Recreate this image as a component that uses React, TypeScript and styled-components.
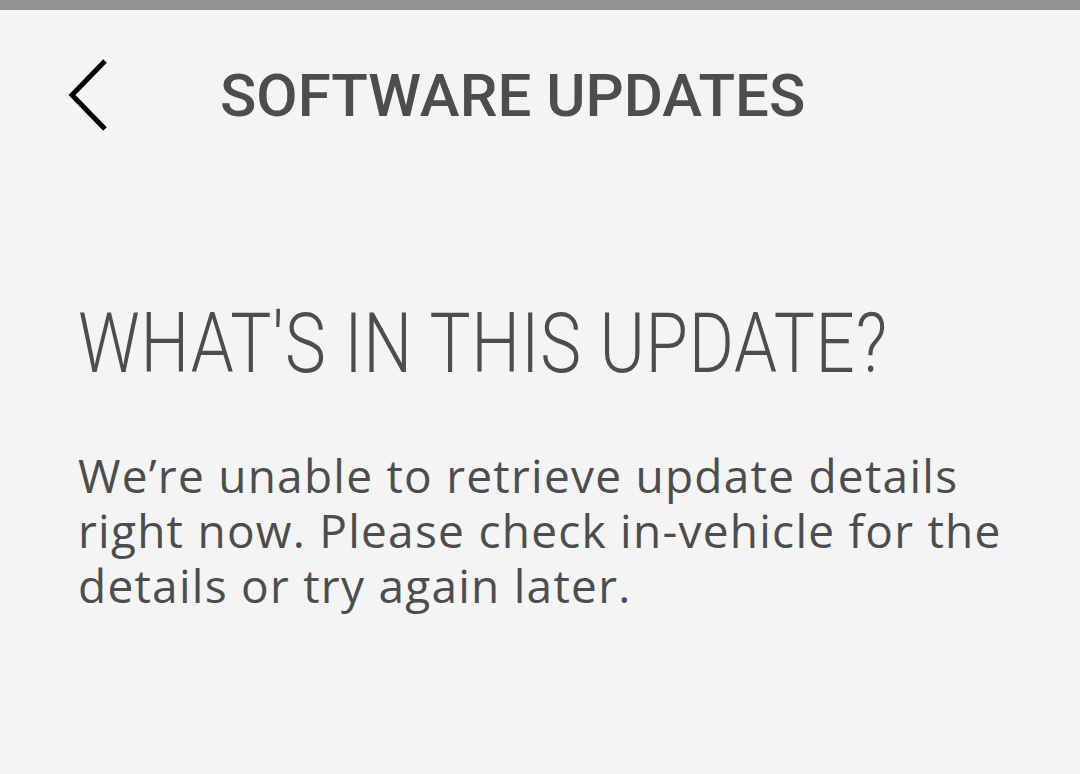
import React from "react";
import styled, { createGlobalStyle } from "styled-components";

const GlobalStyle = createGlobalStyle`
  html, body {
    margin: 0;
    padding: 0;
    background: #f4f4f4;
  }
`;

// Styled Components
const Screen = styled.div`
  width: 1080px;
  height: 774px;
  background: #f4f4f4;
  display: flex;
  flex-direction: column;
  overflow: hidden;
`;

const StatusStrip = styled.div`
  height: 10px;
  background: #939393;
  flex-shrink: 0;
`;

const Header = styled.header`
  height: 172px;
  display: flex;
  align-items: center;
  padding-left: 68px;
`;

const BackButton = styled.button`
  background: none;
  border: none;
  padding: 0;
  width: 42px;
  height: 74px;
  display: flex;
  align-items: center;
  cursor: pointer;
`;

const Title = styled.h1`
  margin: 0 0 0 110px;
  font-family: Roboto, "Noto Sans", sans-serif;
  font-weight: 500;
  font-size: 60px;
  line-height: 1;
  color: #4d4d4d;
  letter-spacing: 0;
`;

const Content = styled.main`
  padding: 0 0 0 78px;
  display: flex;
  flex-direction: column;
`;

const Heading = styled.h2`
  margin: 120px 0 0 0;
  font-family: Roboto, "Noto Sans", sans-serif;
  font-weight: 300;
  font-size: 83px;
  line-height: 1;
  color: #4d4d4d;
  white-space: nowrap;
  letter-spacing: 1px;
  transform: scaleX(0.83);
  transform-origin: left center;
`;

const Message = styled.p`
  margin: 63px 0 0 0;
  font-family: "Open Sans", "Noto Sans", sans-serif;
  font-weight: 400;
  font-size: 46px;
  line-height: 55px;
  letter-spacing: 1.25px;
  color: #4d4d4d;
  white-space: nowrap;
`;

const Chevron = () => (
	<svg width="42" height="74" viewBox="0 0 42 74" fill="none">
		<path
			d="M37 2 L4 36 L37 70"
			stroke="#000"
			strokeWidth="5"
			strokeLinecap="butt"
			strokeLinejoin="miter"
		/>
	</svg>
);

const App: React.FC = () => {
	return (
		<>
			<GlobalStyle />
			<Screen>
				<StatusStrip />
				<Header>
					<BackButton aria-label="Back">
						<Chevron />
					</BackButton>
					<Title>SOFTWARE UPDATES</Title>
				</Header>
				<Content>
					<Heading>WHAT'S IN THIS UPDATE?</Heading>
					<Message>
						We’re unable to retrieve update details
						<br />
						right now. Please check in-vehicle for the
						<br />
						details or try again later.
					</Message>
				</Content>
			</Screen>
		</>
	);
};

export default App;
